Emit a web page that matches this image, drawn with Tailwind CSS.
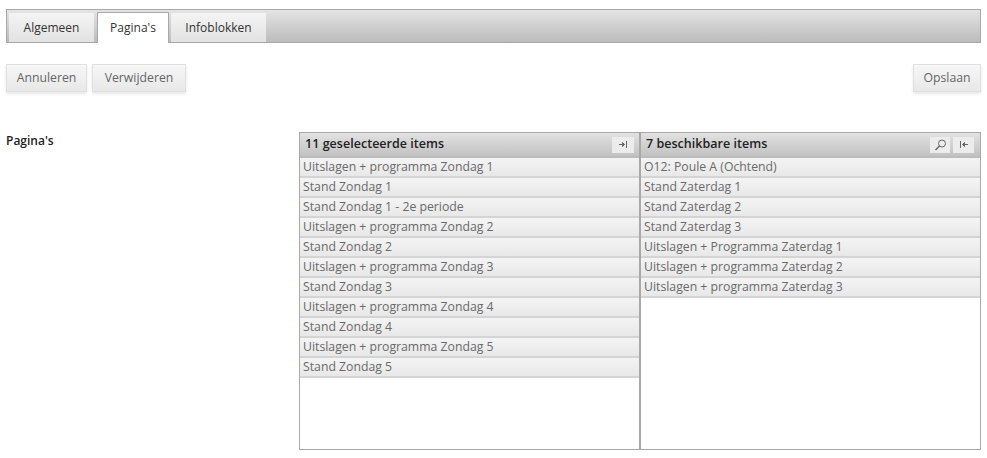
<!DOCTYPE html>
<html lang="en">
<head>
  <meta charset="UTF-8" />
  <title>Pagina's</title>
  <script src="https://cdn.jsdelivr.net/npm/@tailwindcss/browser@4"></script>
</head>
<body class="bg-white h-[458px] overflow-hidden font-['Open_Sans',sans-serif] text-[12px]">
<div class="pt-[9px] px-[6px]">

  <!-- Tabs -->
  <div class="h-[34px] border border-[#a8a8a8] bg-gradient-to-b from-[#e4e4e4] to-[#bcbcbc] flex items-end pl-[2px] gap-[3px]">
    <div class="w-[85px] h-[29px] bg-gradient-to-b from-[#f4f4f4] to-[#e2e2e2] flex items-center justify-center text-[#333]">Algemeen</div>
    <div class="w-[72px] h-[31px] -mb-px bg-white border border-b-0 border-[#a8a8a8] flex items-center justify-center text-[#333]">Pagina's</div>
    <div class="w-[95px] h-[29px] -ml-px bg-gradient-to-b from-[#f4f4f4] to-[#e2e2e2] flex items-center justify-center text-[#333]">Infoblokken</div>
  </div>

  <!-- Buttons -->
  <div class="mt-[21px] flex gap-[5px] text-[12.25px]">
    <button class="w-[81px] h-[28px] border border-[#e0e0e0] bg-gradient-to-b from-[#f7f7f7] to-[#e8e8e8] shadow-[0_2px_3px_rgba(0,0,0,0.1)] text-[#666]">Annuleren</button>
    <button class="w-[94px] h-[28px] border border-[#e0e0e0] bg-gradient-to-b from-[#f7f7f7] to-[#e8e8e8] shadow-[0_2px_3px_rgba(0,0,0,0.1)] text-[#666]">Verwijderen</button>
    <button class="ml-auto w-[68px] h-[28px] border border-[#e0e0e0] bg-gradient-to-b from-[#f7f7f7] to-[#e8e8e8] shadow-[0_2px_3px_rgba(0,0,0,0.1)] text-[#666]">Opslaan</button>
  </div>

  <!-- Picker -->
  <div class="mt-[40px] flex">
    <div class="w-[293px] pt-[1px] font-semibold text-[#222] leading-[16px]">Pagina's</div>

    <div class="w-[342px] h-[318px] border border-[#a8a8a8] border-r-2 flex flex-col">
      <div class="h-[25px] shrink-0 border-b-2 border-[#bcbcbc] bg-gradient-to-b from-[#e2e2e2] to-[#c2c2c2] flex items-center pl-[5px] pr-[5px] font-semibold text-[#222] text-[12.5px] tracking-[0.03px]">
        <span class="flex-1">11 geselecteerde items</span>
        <span class="w-[22px] h-[16px] bg-[#ececec] flex items-center justify-center">
          <svg width="9" height="7" viewBox="0 0 9 7" fill="#666" stroke="#666"><path d="M0 3.500h3.500M3.500 1.500L5.500 3.500L3.500 5.500z"/><path d="M7.500 0v7" fill="none"/></svg>
        </span>
      </div>
      <ul class="text-[#6a6a6a] text-[12.25px]">
        <li class="h-[20px] pl-[3px] flex items-center border-b-2 border-[#d4d4d4] bg-gradient-to-b from-[#f4f4f4] to-[#e8e8e8]">Uitslagen + programma Zondag 1</li>
        <li class="h-[20px] pl-[3px] flex items-center border-b-2 border-[#d4d4d4] bg-gradient-to-b from-[#f4f4f4] to-[#e8e8e8]">Stand Zondag 1</li>
        <li class="h-[20px] pl-[3px] flex items-center border-b-2 border-[#d4d4d4] bg-gradient-to-b from-[#f4f4f4] to-[#e8e8e8]">Stand Zondag 1 - 2e periode</li>
        <li class="h-[20px] pl-[3px] flex items-center border-b-2 border-[#d4d4d4] bg-gradient-to-b from-[#f4f4f4] to-[#e8e8e8]">Uitslagen + programma Zondag 2</li>
        <li class="h-[20px] pl-[3px] flex items-center border-b-2 border-[#d4d4d4] bg-gradient-to-b from-[#f4f4f4] to-[#e8e8e8]">Stand Zondag 2</li>
        <li class="h-[20px] pl-[3px] flex items-center border-b-2 border-[#d4d4d4] bg-gradient-to-b from-[#f4f4f4] to-[#e8e8e8]">Uitslagen + programma Zondag 3</li>
        <li class="h-[20px] pl-[3px] flex items-center border-b-2 border-[#d4d4d4] bg-gradient-to-b from-[#f4f4f4] to-[#e8e8e8]">Stand Zondag 3</li>
        <li class="h-[20px] pl-[3px] flex items-center border-b-2 border-[#d4d4d4] bg-gradient-to-b from-[#f4f4f4] to-[#e8e8e8]">Uitslagen + programma Zondag 4</li>
        <li class="h-[20px] pl-[3px] flex items-center border-b-2 border-[#d4d4d4] bg-gradient-to-b from-[#f4f4f4] to-[#e8e8e8]">Stand Zondag 4</li>
        <li class="h-[20px] pl-[3px] flex items-center border-b-2 border-[#d4d4d4] bg-gradient-to-b from-[#f4f4f4] to-[#e8e8e8]">Uitslagen + programma Zondag 5</li>
        <li class="h-[20px] pl-[3px] flex items-center border-b-2 border-[#d4d4d4] bg-gradient-to-b from-[#f4f4f4] to-[#e8e8e8]">Stand Zondag 5</li>
      </ul>
    </div>

    <div class="w-[340px] h-[318px] border border-l-0 border-[#a8a8a8] flex flex-col">
      <div class="h-[25px] shrink-0 border-b-2 border-[#bcbcbc] bg-gradient-to-b from-[#e2e2e2] to-[#c2c2c2] flex items-center pl-[5px] pr-[6px] gap-[3px] font-semibold text-[#222] text-[12.5px] tracking-[0.03px]">
        <span class="flex-1">7 beschikbare items</span>
        <span class="w-[20px] h-[16px] bg-[#ececec] flex items-center justify-center">
          <svg width="13" height="12" viewBox="0 0 13 12" fill="none" stroke="#666"><circle cx="8" cy="4.500" r="3.500"/><path d="M5.500 7L1.500 11" stroke-width="1.500"/></svg>
        </span>
        <span class="w-[21px] h-[16px] bg-[#ececec] flex items-center justify-center">
          <svg width="9" height="7" viewBox="0 0 9 7" fill="#666" stroke="#666"><path d="M9 3.500H5.500M5.500 1.500L3.500 3.500L5.500 5.500z"/><path d="M1.500 0v7" fill="none"/></svg>
        </span>
      </div>
      <ul class="text-[#6a6a6a] text-[12.25px]">
        <li class="h-[20px] pl-[3px] flex items-center border-b-2 border-[#d4d4d4] bg-gradient-to-b from-[#f4f4f4] to-[#e8e8e8]">O12: Poule A (Ochtend)</li>
        <li class="h-[20px] pl-[3px] flex items-center border-b-2 border-[#d4d4d4] bg-gradient-to-b from-[#f4f4f4] to-[#e8e8e8]">Stand Zaterdag 1</li>
        <li class="h-[20px] pl-[3px] flex items-center border-b-2 border-[#d4d4d4] bg-gradient-to-b from-[#f4f4f4] to-[#e8e8e8]">Stand Zaterdag 2</li>
        <li class="h-[20px] pl-[3px] flex items-center border-b-2 border-[#d4d4d4] bg-gradient-to-b from-[#f4f4f4] to-[#e8e8e8]">Stand Zaterdag 3</li>
        <li class="h-[20px] pl-[3px] flex items-center border-b-2 border-[#d4d4d4] bg-gradient-to-b from-[#f4f4f4] to-[#e8e8e8]">Uitslagen + Programma Zaterdag 1</li>
        <li class="h-[20px] pl-[3px] flex items-center border-b-2 border-[#d4d4d4] bg-gradient-to-b from-[#f4f4f4] to-[#e8e8e8]">Uitslagen + programma Zaterdag 2</li>
        <li class="h-[20px] pl-[3px] flex items-center border-b-2 border-[#d4d4d4] bg-gradient-to-b from-[#f4f4f4] to-[#e8e8e8]">Uitslagen + programma Zaterdag 3</li>
      </ul>
    </div>
  </div>
</div>
</body>
</html>
